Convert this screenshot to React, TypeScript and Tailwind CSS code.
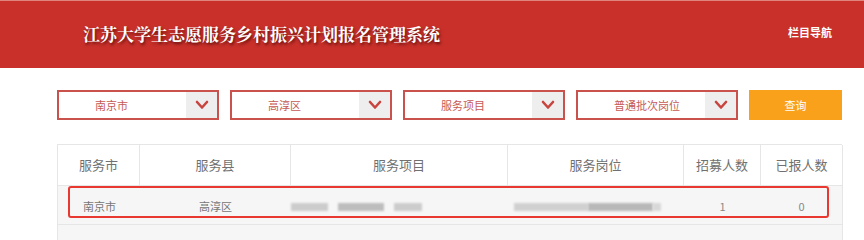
import React from 'react';

const selects = ['南京市', '高淳区', '服务项目', '普通批次岗位'];

const cols = ['服务市', '服务县', '服务项目', '服务岗位', '招募人数', '已报人数'];

const Chevron: React.FC = () => (
  <svg width="14" height="10" viewBox="0 0 14 10">
    <polyline points="2,2 7,7.5 12,2" fill="none" stroke="#c8443f" strokeWidth="2.6" strokeLinecap="round" strokeLinejoin="round" />
  </svg>
);

const Blur: React.FC<{ w: number; tone?: string }> = ({ w, tone = 'bg-[#cccccc]' }) => (
  <div className={`h-[8px] blur-[1px] ${tone}`} style={{ width: w }} />
);

const App: React.FC = () => {
  return (
    <div className="w-[864px] h-[240px] overflow-hidden bg-white font-['Noto_Sans_CJK_SC',sans-serif]">
      {/* Header */}
      <div className="h-[68px] bg-[#c9302a] border-t border-[#e2847e] flex items-center justify-between pl-[83px] pr-[32px]">
        <h1 className="text-white text-[17px] font-bold -mt-[2px] [text-shadow:1px_2px_3px_rgba(60,0,0,0.75)] font-['Noto_Serif_CJK_SC','Noto_Sans_CJK_SC',serif]">
          江苏大学生志愿服务乡村振兴计划报名管理系统
        </h1>
        <span className="text-white text-[11px] font-bold -mt-[4px]">栏目导航</span>
      </div>

      {/* Filters */}
      <div className="flex gap-[11px] pl-[57px] mt-[22px]">
        {selects.map(s => (
          <div key={s} className="w-[162px] h-[30px] border-2 border-[#c9524c] flex">
            <div className="flex-1 flex items-center pl-[36px] text-[11px] text-[#c65a54]">{s}</div>
            <div className="w-[31px] bg-[#eeeeee] flex items-center justify-center">
              <Chevron />
            </div>
          </div>
        ))}
        <button className="w-[93px] h-[30px] bg-[#f9a11b] text-white text-[11px] flex items-center justify-center">
          查询
        </button>
      </div>

      {/* Table */}
      <div className="relative ml-[57px] mt-[24px] w-[785px]">
        <div className="grid grid-cols-[82px_151px_217px_176px_77px_82px] border-t border-l border-[#e6e6e6]">
          {cols.map(c => (
            <div key={c} className="h-[41px] flex items-center justify-center border-r border-b border-[#e6e6e6] text-[13px] text-[#707070]">
              {c}
            </div>
          ))}

          <div className="h-[39px] bg-[#f6f6f6] flex items-center pl-[25px] border-b border-[#e6e6e6] text-[11px] text-[#777777] pt-[2px]">南京市</div>
          <div className="h-[39px] bg-[#f6f6f6] flex items-center justify-center border-b border-[#e6e6e6] text-[11px] text-[#777777] pt-[2px]">高淳区</div>
          <div className="h-[39px] bg-[#f6f6f6] flex items-center gap-[10px] border-b border-[#e6e6e6] pt-[4px]">
            <Blur w={37} />
            <Blur w={46} tone="bg-[#bdbdbd]" />
            <Blur w={28} />
          </div>
          <div className="h-[39px] bg-[#f6f6f6] flex items-center pl-[6px] border-b border-[#e6e6e6] pt-[4px]">
            <Blur w={74} tone="bg-[#d0d0d0]" />
            <Blur w={65} tone="bg-[#b8b8b8]" />
            <Blur w={8} tone="bg-[#d8d8d8]" />
          </div>
          <div className="h-[39px] bg-[#f6f6f6] flex items-center justify-center border-b border-[#e6e6e6] text-[11px] text-[#8a8a8a] pt-[3px]">1</div>
          <div className="h-[39px] bg-[#f6f6f6] flex items-center justify-center border-b border-r border-[#e6e6e6] text-[11px] text-[#8a8a8a] pt-[3px]">0</div>

          <div className="col-span-6 h-[20px] bg-[#f6f6f6] border-r border-[#e6e6e6]" />
        </div>

        {/* highlight annotation */}
        <div className="absolute left-[11px] top-[42px] w-[761px] h-[32px] border-2 border-[#e8382f] rounded-[3px] pointer-events-none" />
      </div>
    </div>
  );
};

export default App;
